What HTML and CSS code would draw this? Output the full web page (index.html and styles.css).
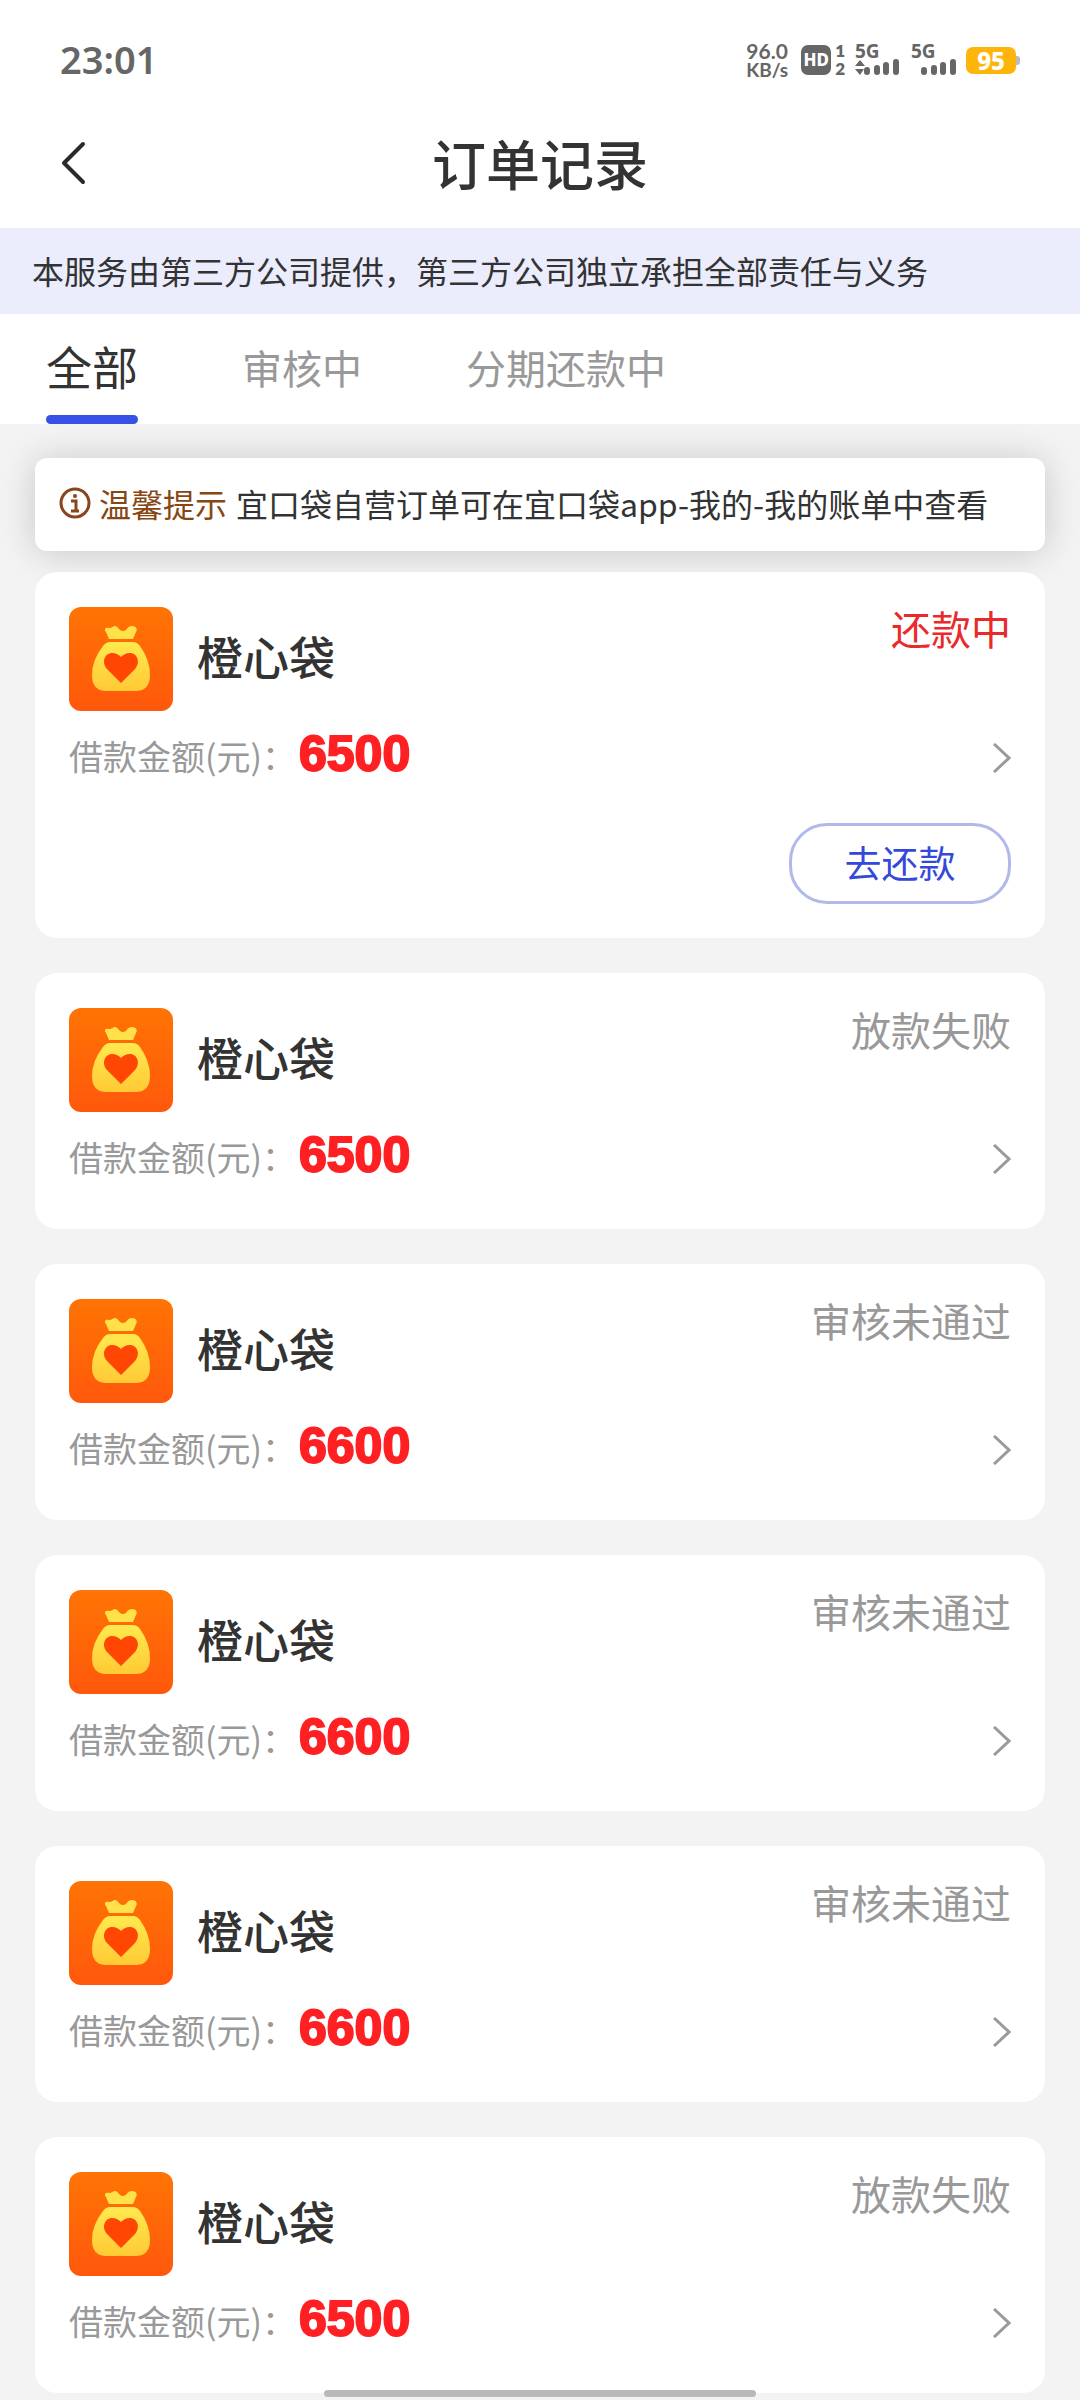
FILE: index.html
```html
<!DOCTYPE html>
<html lang="zh-CN">
<head>
  <meta charset="UTF-8" />
  <meta name="viewport" content="width=device-width, initial-scale=1.0"/>
  <title>订单记录</title>
  <link rel="stylesheet" href="styles.css">
</head>
<body>

<!-- shared icons -->
<svg class="sprite" aria-hidden="true">
  <defs>
    <linearGradient id="logo-bg" x1="0" y1="0" x2="0" y2="1">
      <stop offset="0" stop-color="#ff7404"/>
      <stop offset="1" stop-color="#ff580c"/>
    </linearGradient>
    <linearGradient id="logo-bag" x1="0" y1="0" x2="0" y2="1">
      <stop offset="0" stop-color="#ffe94e"/>
      <stop offset="1" stop-color="#ffca36"/>
    </linearGradient>
  </defs>
  <symbol id="logo" viewBox="0 0 104 104">
    <rect width="104" height="104" rx="12" fill="url(#logo-bg)"/>
    <path d="M40 32 L37 25 C34 21 38 20 40 21 C43 21 44 19 46 19 C49 19 50 24 54 24 C58 24 58 19 63 19 C67 19 69 22 67 25 L64 32 Z" fill="#ffe14a"/>
    <path d="M41 35 H64 Q68 35 71 39 Q81 53 81 68 Q81 83 68 84 H36 Q23 83 23 68 Q23 53 34 39 Q37 35 41 35 Z" fill="url(#logo-bag)"/>
    <path d="M52 76 L38 62 C32 55 36 46 43 46 C47 46 50 48 52 50 C54 48 57 46 61 46 C68 46 72 55 66 62 Z" fill="#ff4602"/>
  </symbol>
  <symbol id="arrow" viewBox="0 0 18 30">
    <path d="M1 1 L16 15 L1 29" fill="none" stroke="#9a9a9a" stroke-width="3"/>
  </symbol>
</svg>

<div class="status-bar">
  <span class="time">23:01</span>
  <div class="status-icons">
    <div class="speed"><span>96.0</span><small>KB/s</small></div>
    <span class="hd">HD</span>
    <span class="sim">1<br>2</span>
    <svg class="signal" width="44" height="48" viewBox="0 -8 44 48">
      <text x="0" y="14">5G</text>
      <path d="M0 22 L5 16 L10 22 Z M0 25 H9 L5 31 Z"/>
      <rect x="9" y="23" width="6" height="8" rx="3"/>
      <rect x="19" y="21" width="6" height="10" rx="3"/>
      <rect x="28" y="18" width="6" height="13" rx="3"/>
      <rect x="38" y="15" width="6" height="16" rx="3"/>
    </svg>
    <svg class="signal second" width="46" height="48" viewBox="0 -8 46 48">
      <text x="0" y="14">5G</text>
      <rect x="10" y="23" width="6" height="8" rx="3"/>
      <rect x="20" y="21" width="6" height="10" rx="3"/>
      <rect x="29" y="18" width="6" height="13" rx="3"/>
      <rect x="39" y="15" width="6" height="16" rx="3"/>
    </svg>
    <span class="battery">95</span>
  </div>
</div>

<header>
  <button class="back" aria-label="返回">
    <svg width="26" height="44" viewBox="0 0 26 44">
      <path d="M23 3 L4 22 L23 41" fill="none" stroke="#2b2b2b" stroke-width="4" stroke-linecap="round" stroke-linejoin="round"/>
    </svg>
  </button>
  <h1>订单记录</h1>
</header>

<p class="notice">本服务由第三方公司提供，第三方公司独立承担全部责任与义务</p>

<nav>
  <a class="active" href="#all">全部</a>
  <a href="#review">审核中</a>
  <a href="#repay">分期还款中</a>
</nav>

<main>
  <div class="tip">
    <svg width="32" height="32" viewBox="0 0 32 32">
      <circle cx="16" cy="16" r="14" fill="none" stroke="#8a4420" stroke-width="3"/>
      <path d="M12 14 H17 V23 M12 24 H20" fill="none" stroke="#8a4420" stroke-width="3"/>
      <circle cx="16" cy="9" r="2" fill="#8a4420"/>
    </svg>
    <strong>温馨提示</strong>
    <span>宜口袋自营订单可在宜口袋app-我的-我的账单中查看</span>
  </div>

  <div class="orders" id="all">
    <div class="order">
      <div class="order-head">
        <svg class="logo"><use href="#logo"/></svg>
        <h2>橙心袋</h2>
        <span class="state repaying">还款中</span>
      </div>
      <div class="order-row">
        <span class="label">借款金额(元)：</span>
        <span class="amount">6500</span>
        <svg class="arrow"><use href="#arrow"/></svg>
      </div>
      <button class="repay">去还款</button>
    </div>

    <div class="order">
      <div class="order-head">
        <svg class="logo"><use href="#logo"/></svg>
        <h2>橙心袋</h2>
        <span class="state">放款失败</span>
      </div>
      <div class="order-row">
        <span class="label">借款金额(元)：</span>
        <span class="amount">6500</span>
        <svg class="arrow"><use href="#arrow"/></svg>
      </div>
    </div>

    <div class="order">
      <div class="order-head">
        <svg class="logo"><use href="#logo"/></svg>
        <h2>橙心袋</h2>
        <span class="state">审核未通过</span>
      </div>
      <div class="order-row">
        <span class="label">借款金额(元)：</span>
        <span class="amount">6600</span>
        <svg class="arrow"><use href="#arrow"/></svg>
      </div>
    </div>

    <div class="order">
      <div class="order-head">
        <svg class="logo"><use href="#logo"/></svg>
        <h2>橙心袋</h2>
        <span class="state">审核未通过</span>
      </div>
      <div class="order-row">
        <span class="label">借款金额(元)：</span>
        <span class="amount">6600</span>
        <svg class="arrow"><use href="#arrow"/></svg>
      </div>
    </div>

    <div class="order">
      <div class="order-head">
        <svg class="logo"><use href="#logo"/></svg>
        <h2>橙心袋</h2>
        <span class="state">审核未通过</span>
      </div>
      <div class="order-row">
        <span class="label">借款金额(元)：</span>
        <span class="amount">6600</span>
        <svg class="arrow"><use href="#arrow"/></svg>
      </div>
    </div>

    <div class="order">
      <div class="order-head">
        <svg class="logo"><use href="#logo"/></svg>
        <h2>橙心袋</h2>
        <span class="state">放款失败</span>
      </div>
      <div class="order-row">
        <span class="label">借款金额(元)：</span>
        <span class="amount">6500</span>
        <svg class="arrow"><use href="#arrow"/></svg>
      </div>
    </div>
  </div>
</main>

<div class="home-bar"></div>
</body>
</html>
```
FILE: styles.css
```css
* { box-sizing: border-box; }
body { font-family: "Noto Sans CJK SC", sans-serif; margin: 0; background: #f3f3f3; color: #333; }
h1, h2, p { margin: 0; }
button { font-family: inherit; background: none; border: none; padding: 0; cursor: pointer; }
.sprite { position: absolute; width: 0; height: 0; }

.status-bar { display: flex; align-items: center; justify-content: space-between; height: 120px; padding: 0 60px; background: #fff; color: #666; font-family: "Noto Sans", sans-serif; font-weight: 600; }
.time { font-size: 38px; line-height: 40px; padding-bottom: 2px; }
.status-icons { display: flex; align-items: center; }
.speed { display: flex; flex-direction: column; align-items: center; font-family: Lato, sans-serif; font-size: 21px; line-height: 19px; font-weight: 700; margin-right: 13px; }
.speed small { font-size: 19px; }
.hd { width: 30px; height: 30px; line-height: 30px; border-radius: 7px; background: #666; color: #fff; font-size: 17px; font-weight: 800; text-align: center; }
.sim { font-family: Lato, sans-serif; font-size: 17px; line-height: 18px; font-weight: 800; margin: 0 10px 0 4px; }
.signal { fill: #666; font-size: 19px; font-weight: 700; }
.signal.second { margin: 0 9px 0 12px; }
.battery { position: relative; width: 50px; height: 27px; line-height: 27px; border-radius: 7px; background: #fdb50c; color: #fff; font-size: 24px; font-weight: 800; text-align: center; margin-right: 4px; }
.battery::after { content: ""; position: absolute; left: 50px; top: 9px; width: 4px; height: 9px; border-radius: 0 3px 3px 0; background: #bbb; }

header { display: grid; grid-template-columns: 1fr auto 1fr; align-items: center; height: 108px; padding: 0 60px 22px; background: #fff; }
.back { justify-self: start; display: flex; }
h1 { font-size: 54px; line-height: 64px; font-weight: 500; }

.notice { padding: 0 32px 2px; background: #ebedfd; font-size: 32px; line-height: 84px; white-space: nowrap; }

nav { display: flex; gap: 104px; height: 110px; padding: 0 46px; background: #fff; }
nav a { color: #999; font-size: 40px; line-height: 106px; text-decoration: none; }
nav a.active { position: relative; color: #333; font-size: 46px; line-height: 102px; }
nav a.active::after { content: ""; position: absolute; left: 0; right: 0; bottom: 0; height: 9px; border-radius: 5px; background: #3751e6; }

main { padding: 34px 35px 7px; }
.tip { display: flex; align-items: center; height: 93px; padding: 0 24px 4px; border-radius: 12px; background: #fff; box-shadow: 0 2px 36px rgba(0,0,0,0.18); font-size: 32px; white-space: nowrap; }
.tip strong { color: #874612; font-weight: 400; margin: 0 9px 0 8px; }

.orders { display: flex; flex-direction: column; gap: 35px; margin-top: 21px; }
.order { padding: 35px 34px 34px; border-radius: 22px; background: #fff; }
.order-head { display: flex; align-items: center; }
.logo { width: 104px; height: 104px; }
h2 { font-size: 46px; line-height: 60px; font-weight: 500; margin-left: 24px; padding-bottom: 8px; }
.state { align-self: flex-start; margin-left: auto; color: #999; font-size: 40px; line-height: 42px; }
.state.repaying { color: #ea2a2a; }
.order-row { display: flex; align-items: center; height: 76px; margin-top: 7px; padding-top: 4px; }
.label { color: #999; font-size: 34px; padding-bottom: 6px; }
.amount { color: #ff2024; font-family: "Liberation Sans", sans-serif; font-size: 50px; line-height: 60px; font-weight: 700; -webkit-text-stroke: 2px #ff2024; margin-left: 3px; padding-bottom: 8px; }
.arrow { width: 18px; height: 30px; margin-left: auto; }
.repay { display: block; width: 222px; height: 81px; margin: 29px 0 0 auto; padding-bottom: 4px; border: 3px solid #b0b9e8; border-radius: 38px; color: #3549d8; font-size: 37px; }

.home-bar { position: fixed; left: 30%; right: 30%; bottom: 3px; height: 7px; border-radius: 4px; background: #b9b9b9; }
```
